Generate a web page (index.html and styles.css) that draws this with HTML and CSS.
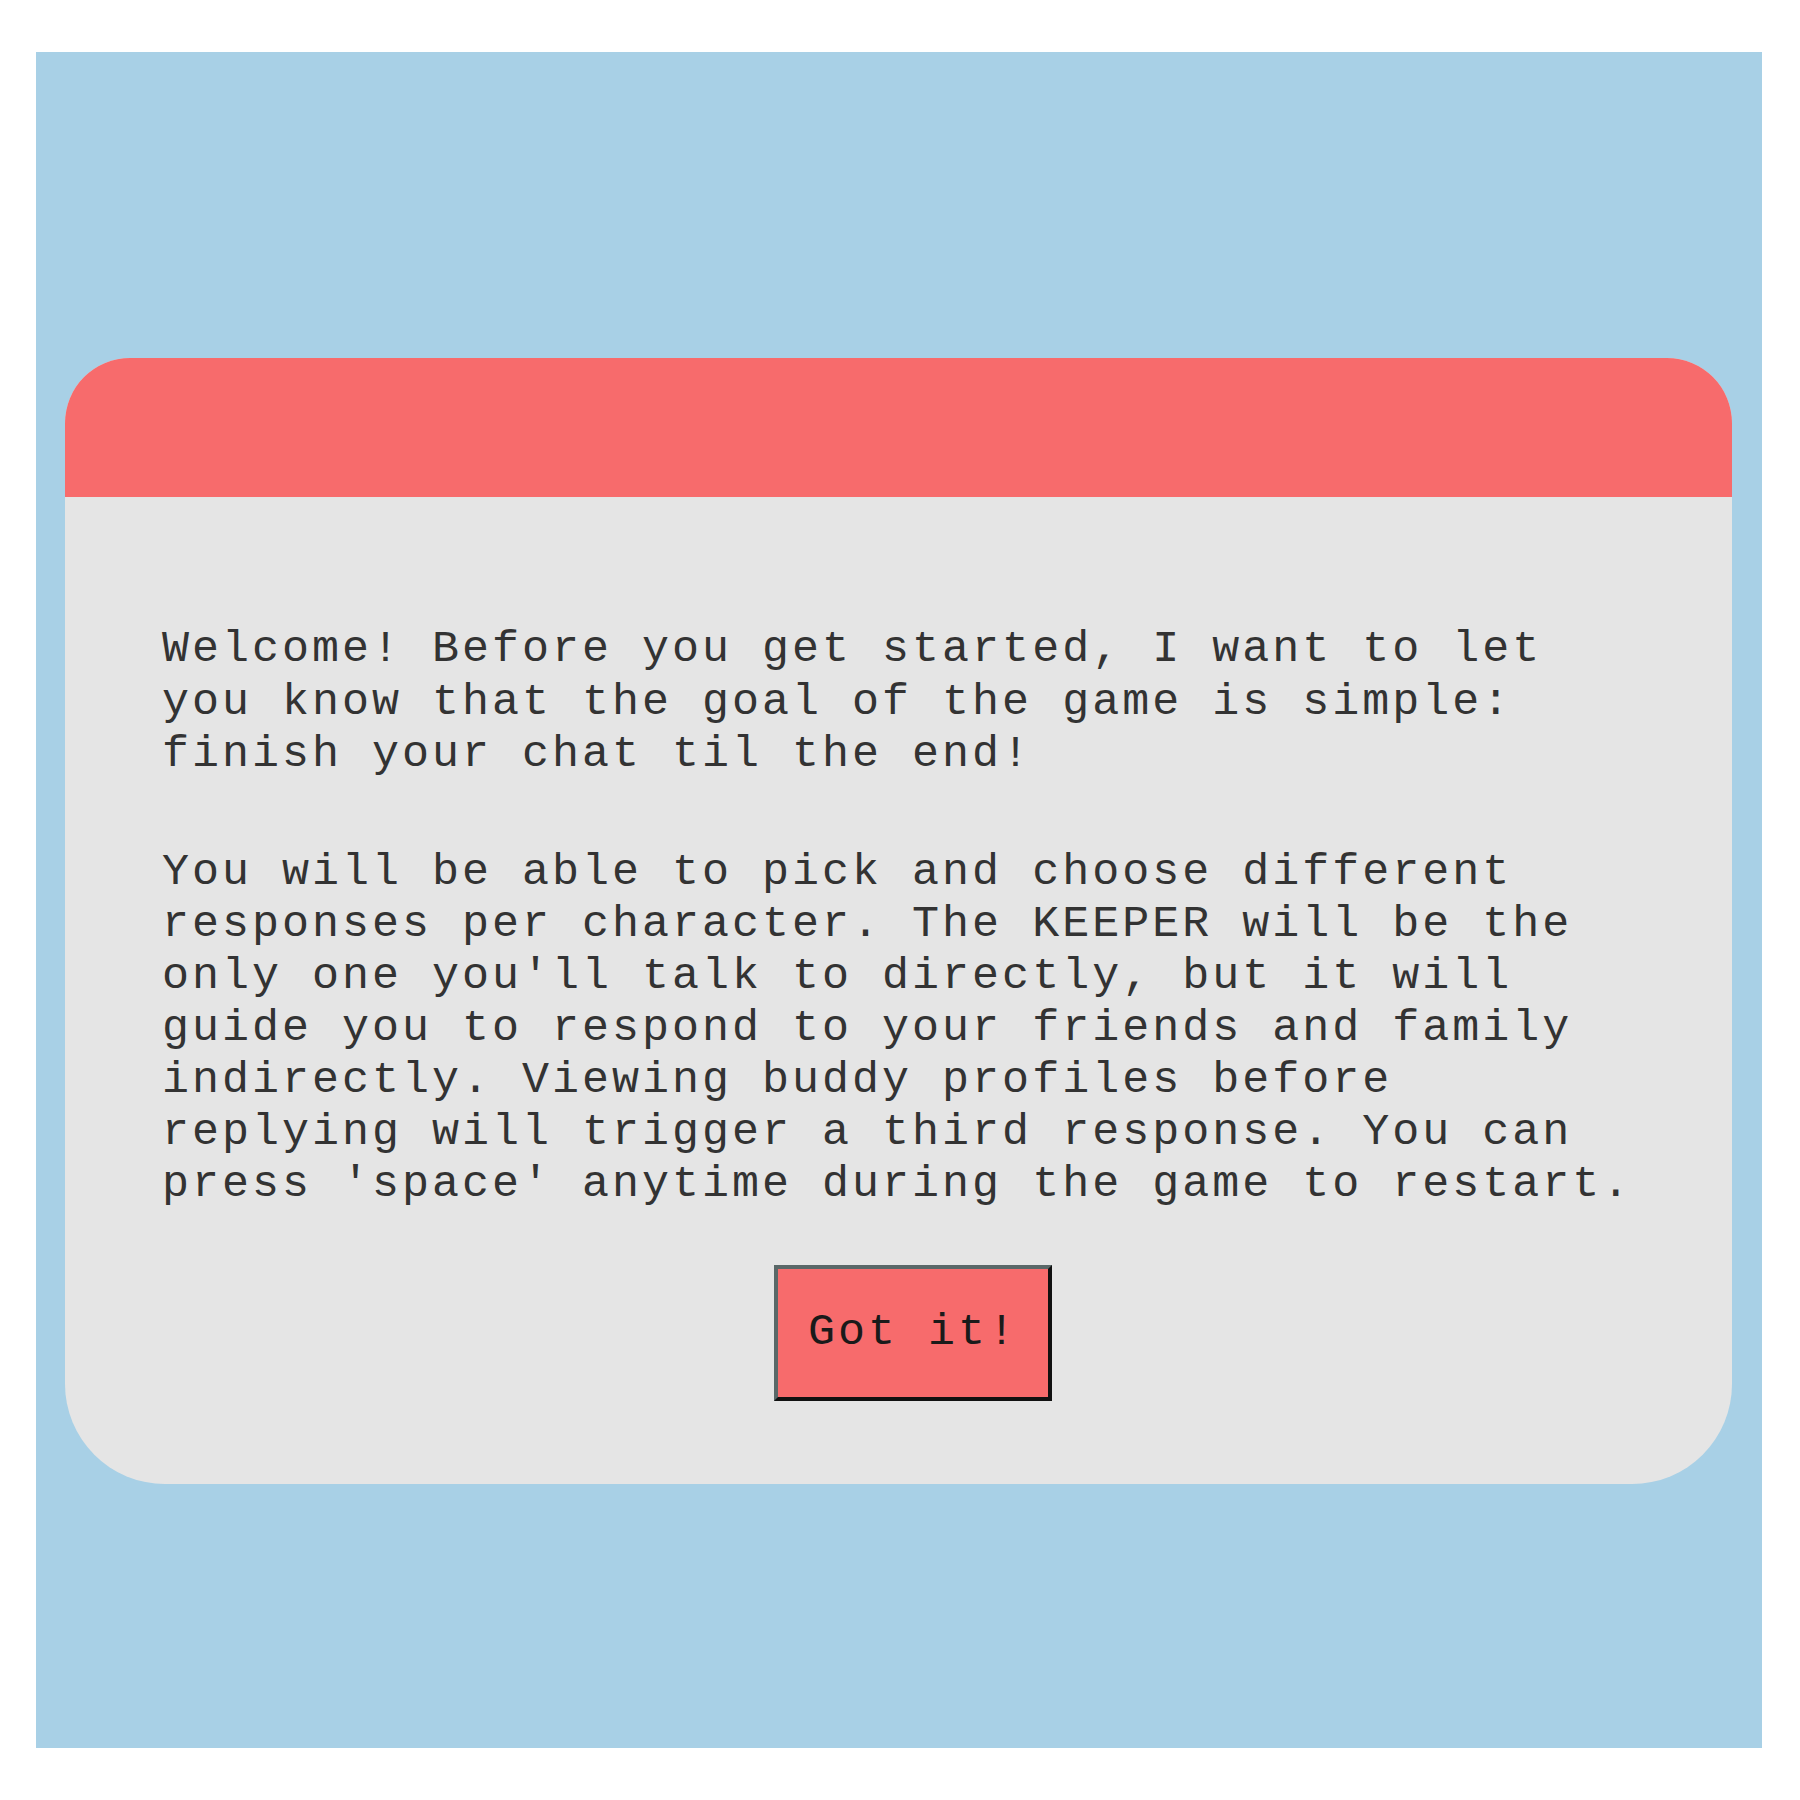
FILE: index.html
```html
<!DOCTYPE html>
<html>
<head>
<meta charset="utf-8">
<link rel="stylesheet" href="styles.css">
</head>
<body>
<div class="stage">
  <div class="card">
    <div class="card-header"></div>
    <div class="card-body">
      <p class="para para-first">Welcome! Before you get started, I want to let you know that the goal of the game is simple: finish your chat til the end!</p>
      <p class="para">You will be able to pick and choose different responses per character. The KEEPER will be the only one you'll talk to directly, but it will guide you to respond to your friends and family indirectly. Viewing buddy profiles before replying will trigger a third response. You can press 'space' anytime during the game to restart.</p>
      <button class="btn">Got it!</button>
    </div>
  </div>
</div>
</body>
</html>
```
FILE: styles.css
```css
html, body {
  margin: 0;
  padding: 0;
  background: #ffffff;
}

body {
  width: 1800px;
  height: 1800px;
  padding: 52px 38px 52px 36px;
  box-sizing: border-box;
}

.stage {
  background: #a8d0e6;
  width: 1726px;
  height: 1696px;
  padding: 306px 30px 0 29px;
  box-sizing: border-box;
}

.card {
  width: 1667px;
  border-radius: 65px 65px 100px 100px;
  overflow: hidden;
  background: #e5e5e5;
  display: flex;
  flex-direction: column;
}

.card-header {
  height: 139px;
  background: #f76b6c;
}

.card-body {
  padding: 127px 0 83px 97px;
  display: flex;
  flex-direction: column;
  align-items: flex-start;
}

.para {
  margin: 0;
  width: 1485px;
  font-family: "Liberation Mono", "Courier New", monospace;
  font-size: 45px;
  letter-spacing: 3px;
  line-height: 52px;
  color: #333333;
}

.para-first {
  line-height: 52.5px;
  margin-bottom: 65px;
}

.btn {
  margin-top: 54px;
  margin-left: 612px;
  width: 278px;
  height: 136px;
  padding: 0;
  background: #f76b6c;
  border-style: solid;
  border-width: 4px;
  border-color: #5a6868 #111111 #111111 #5a6868;
  font-family: "Liberation Mono", "Courier New", monospace;
  font-size: 45px;
  letter-spacing: 3px;
  color: #1a1a1a;
}
```
